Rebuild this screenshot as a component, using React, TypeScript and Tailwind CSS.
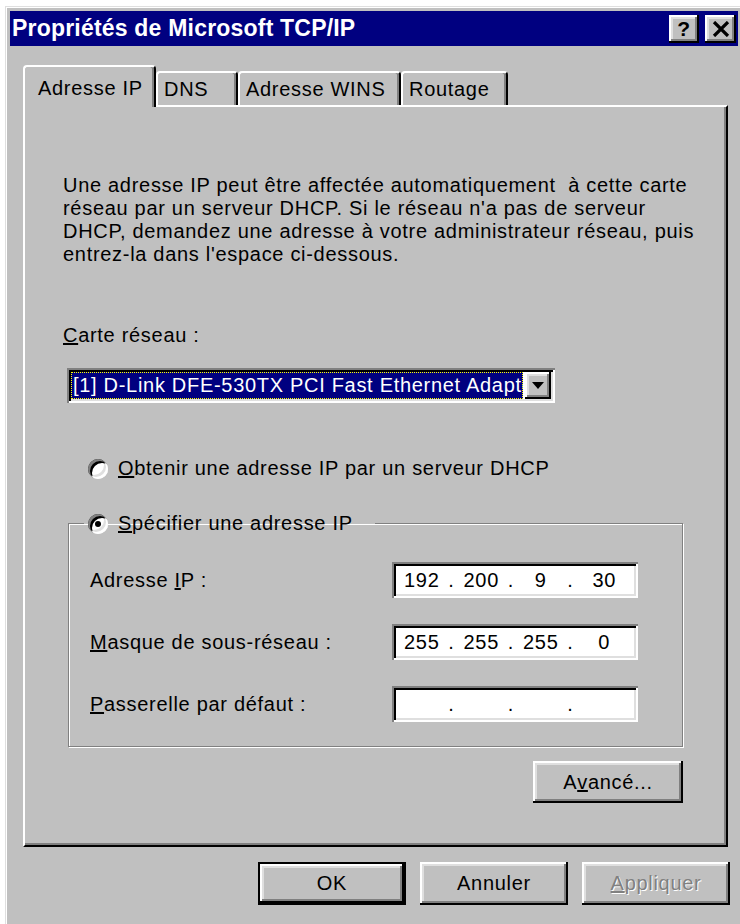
import type { ReactNode } from 'react';

// Win95-style bevels, doubled for the large dialog scale
const RAISED =
  'shadow-[inset_-2px_-2px_#000,inset_2px_2px_#fff,inset_-4px_-4px_#808080,inset_4px_4px_#dfdfdf]';
const SUNKEN =
  'shadow-[inset_2px_2px_#808080,inset_-2px_-2px_#fff,inset_4px_4px_#000,inset_-4px_-4px_#dfdfdf]';

function Radio({ checked }: { checked?: boolean }): JSX.Element {
  return (
    <span
      className={`inline-flex h-[20px] w-[20px] shrink-0 items-center justify-center rounded-full bg-white ${SUNKEN}`}
    >
      {checked && <span className="h-[6px] w-[6px] rounded-full bg-black" />}
    </span>
  );
}

function IpField({ parts }: { parts: string[] }): JSX.Element {
  return (
    <div className={`flex h-[36px] w-[246px] items-center bg-white px-[4px] ${SUNKEN}`}>
      {parts.map((p, i) => (
        <div key={i} className="flex flex-1 items-center">
          <span className="flex-1 text-center">{p}</span>
          {i < 3 && <span className="w-[8px] text-center">.</span>}
        </div>
      ))}
    </div>
  );
}

function Button({
  children,
  primary,
  disabled,
  className = ''
}: {
  children: ReactNode;
  primary?: boolean;
  disabled?: boolean;
  className?: string;
}): JSX.Element {
  return (
    <div
      className={`flex items-center justify-center bg-[#c0c0c0] ${RAISED} ${
        primary ? 'border-2 border-black' : ''
      } ${disabled ? 'text-[#808080] [text-shadow:1px_1px_0_#fff]' : ''} ${className}`}
    >
      {children}
    </div>
  );
}

const TABS = [
  { label: 'DNS', width: 'w-[82px]' },
  { label: 'Adresse WINS', width: 'w-[163px]' },
  { label: 'Routage', width: 'w-[107px]' }
];

const FIELDS: { label: ReactNode; parts: string[] }[] = [
  {
    label: (
      <>
        Adresse <u>I</u>P :
      </>
    ),
    parts: ['192', '200', '9', '30']
  },
  {
    label: (
      <>
        <u>M</u>asque de sous-réseau :
      </>
    ),
    parts: ['255', '255', '255', '0']
  },
  {
    label: (
      <>
        <u>P</u>asserelle par défaut :
      </>
    ),
    parts: ['', '', '', '']
  }
];

export default function App(): JSX.Element {
  return (
    <div className="h-[924px] w-[740px] overflow-hidden bg-white pl-[5px] pt-[6px] font-['Liberation_Sans',Arial,sans-serif] text-[20px] leading-[23px] tracking-[0.7px] text-black">
      <div className="h-[930px] w-[735px] border-l border-t border-[#dfdfdf] bg-[#c0c0c0] pl-[4px] pr-[2px] pt-[4px] shadow-[inset_1px_1px_#fff]">
        {/* title bar */}
        <div className="flex h-[35px] items-center justify-between bg-[#000080] pl-[2px] pr-[2px]">
          <span className="text-[23px] font-bold leading-none tracking-[0.2px] text-white">
            Propriétés de Microsoft TCP/IP
          </span>
          <div className="flex gap-[6px]">
            <div className={`flex h-[28px] w-[30px] items-center justify-center bg-[#c0c0c0] text-[21px] font-bold leading-none ${RAISED}`}>
              ?
            </div>
            <div className={`flex h-[28px] w-[31px] items-center justify-center bg-[#c0c0c0] ${RAISED}`}>
              <svg width="18" height="16" viewBox="0 0 18 16">
                <path d="M2 1 L16 15 M16 1 L2 15" stroke="#000" strokeWidth="3.2" />
              </svg>
            </div>
          </div>
        </div>

        {/* tabs */}
        <div className="mt-[19px] flex h-[40px] items-end pl-[13px]">
          <div className="relative z-10 -mb-[2px] flex h-[42px] w-[133px] items-start rounded-t-[4px] border-l-2 border-r-2 border-t-2 border-l-white border-r-black border-t-white bg-[#c0c0c0] pl-[13px] pt-[10px] shadow-[inset_-2px_0_#808080]">
            Adresse IP
          </div>
          {TABS.map((t) => (
            <div
              key={t.label}
              className={`flex h-[34px] ${t.width} items-start rounded-t-[4px] border-l-2 border-r-2 border-t-2 border-l-white border-r-black border-t-white pl-[6px] pt-[5px] shadow-[inset_-2px_0_#808080]`}
            >
              {t.label}
            </div>
          ))}
        </div>

        {/* tab page */}
        <div className="ml-[13px] h-[742px] w-[705px] border-2 border-b-black border-l-white border-r-black border-t-white pl-[38px] pt-[67px] shadow-[inset_-2px_-2px_#808080]">
          <p className="whitespace-pre">
            Une adresse IP peut être affectée automatiquement  à cette carte
            <br />
            réseau par un serveur DHCP. Si le réseau n&apos;a pas de serveur
            <br />
            DHCP, demandez une adresse à votre administrateur réseau, puis
            <br />
            entrez-la dans l&apos;espace ci-dessous.
          </p>

          <div className="mt-[58px]">
            <u>C</u>arte réseau :
          </div>

          <div className={`ml-[4px] mt-[21px] flex h-[35px] w-[488px] items-stretch bg-white p-[4px] ${SUNKEN}`}>
            <div className="flex min-w-0 flex-1 items-center overflow-hidden whitespace-nowrap bg-[#000080] pl-[2px] text-white outline-dotted outline-1 -outline-offset-1 outline-[#ffff00]">
              [1] D-Link DFE-530TX PCI Fast Ethernet Adapter
            </div>
            <div className={`ml-[2px] flex w-[26px] items-center justify-center bg-[#c0c0c0] ${RAISED}`}>
              <svg width="12" height="7" viewBox="0 0 12 7">
                <path d="M0 0 H12 L6 7 Z" fill="#000" />
              </svg>
            </div>
          </div>

          <div className="ml-[25px] mt-[54px] flex items-center gap-[10px]">
            <Radio />
            <span>
              <u>O</u>btenir une adresse IP par un serveur DHCP
            </span>
          </div>

          <fieldset className="ml-[5px] mt-[32px] h-[235px] w-[615px] border border-[#808080] shadow-[inset_1px_1px_#fff,1px_1px_#fff]">
            <legend className="ml-[15px] flex items-center gap-[10px] px-[4px]">
              <Radio checked />
              <span className="pr-[18px]">
                <u>S</u>pécifier une adresse IP
              </span>
            </legend>
            <div className="mt-[27px] flex flex-col gap-[26px] pl-[21px]">
              {FIELDS.map((f, i) => (
                <div key={i} className="flex items-center">
                  <span className="w-[302px]">{f.label}</span>
                  <IpField parts={f.parts} />
                </div>
              ))}
            </div>
          </fieldset>

          <div className="ml-[5px] mt-[14px] flex w-[615px] justify-end">
            <Button className="h-[42px] w-[150px]">
              A<u>v</u>ancé...
            </Button>
          </div>
        </div>

        {/* dialog buttons */}
        <div className="mt-[15px] flex justify-end gap-[14px] pr-[8px]">
          <Button primary className="h-[43px] w-[148px]">
            OK
          </Button>
          <Button className="h-[43px] w-[148px]">Annuler</Button>
          <Button disabled className="h-[43px] w-[148px]">
            <span>
              <u>A</u>ppliquer
            </span>
          </Button>
        </div>
      </div>
    </div>
  );
}
